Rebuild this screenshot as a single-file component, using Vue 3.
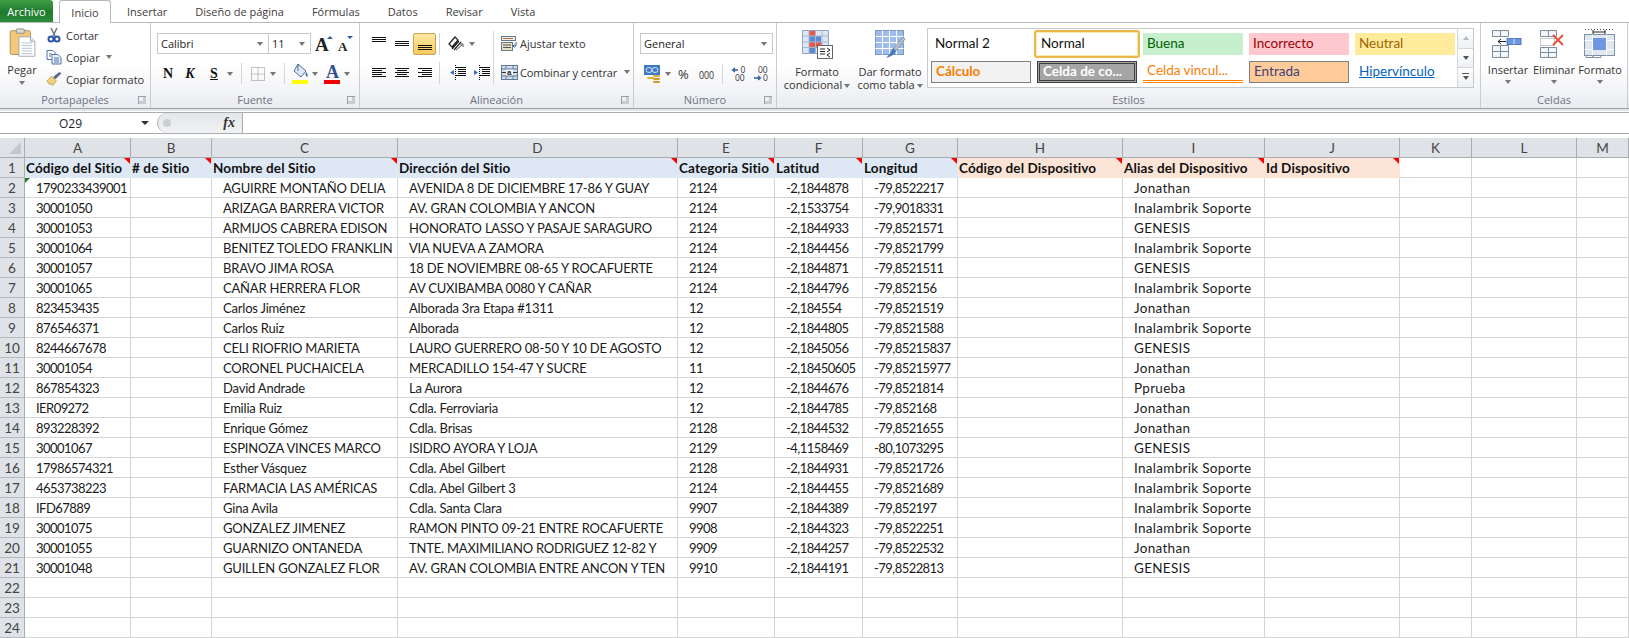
<script setup>
const columns = ['A','B','C','D','E','F','G','H','I','J','K','L','M']
const head = ['Código del Sitio','# de Sitio','Nombre del Sitio','Dirección del Sitio','Categoria Sitio','Latitud','Longitud','Código del Dispositivo','Alias del Dispositivo','Id Dispositivo']
const rows = [
['1790233439001','AGUIRRE MONTAÑO DELIA','AVENIDA 8 DE DICIEMBRE 17-86 Y GUAY','2124','-2,1844878','-79,8522217','Jonathan'],
['30001050','ARIZAGA BARRERA VICTOR','AV. GRAN COLOMBIA Y ANCON','2124','-2,1533754','-79,9018331','Inalambrik Soporte'],
['30001053','ARMIJOS CABRERA EDISON','HONORATO LASSO Y PASAJE SARAGURO','2124','-2,1844933','-79,8521571','GENESIS'],
['30001064','BENITEZ TOLEDO FRANKLIN','VIA NUEVA A ZAMORA','2124','-2,1844456','-79,8521799','Inalambrik Soporte'],
['30001057','BRAVO JIMA ROSA','18 DE NOVIEMBRE 08-65 Y ROCAFUERTE','2124','-2,1844871','-79,8521511','GENESIS'],
['30001065','CAÑAR HERRERA FLOR','AV CUXIBAMBA 0080 Y CAÑAR','2124','-2,1844796','-79,852156','Inalambrik Soporte'],
['823453435','Carlos Jiménez','Alborada 3ra Etapa #1311','12','-2,184554','-79,8521519','Jonathan'],
['876546371','Carlos Ruiz','Alborada','12','-2,1844805','-79,8521588','Inalambrik Soporte'],
['8244667678','CELI RIOFRIO MARIETA','LAURO GUERRERO 08-50 Y 10 DE AGOSTO','12','-2,1845056','-79,85215837','GENESIS'],
['30001054','CORONEL PUCHAICELA','MERCADILLO 154-47 Y SUCRE','11','-2,18450605','-79,85215977','Jonathan'],
['867854323','David Andrade','La Aurora','12','-2,1844676','-79,8521814','Pprueba'],
['IER09272','Emilia Ruiz','Cdla. Ferroviaria','12','-2,1844785','-79,852168','Jonathan'],
['893228392','Enrique Gómez','Cdla. Brisas','2128','-2,1844532','-79,8521655','Jonathan'],
['30001067','ESPINOZA VINCES MARCO','ISIDRO AYORA Y LOJA','2129','-4,1158469','-80,1073295','GENESIS'],
['17986574321','Esther Vásquez','Cdla. Abel Gilbert','2128','-2,1844931','-79,8521726','Inalambrik Soporte'],
['4653738223','FARMACIA LAS AMÉRICAS','Cdla. Abel Gilbert 3','2124','-2,1844455','-79,8521689','Inalambrik Soporte'],
['IFD67889','Gina Avila','Cdla. Santa Clara','9907','-2,1844389','-79,852197','Inalambrik Soporte'],
['30001075','GONZALEZ JIMENEZ','RAMON PINTO 09-21 ENTRE ROCAFUERTE','9908','-2,1844323','-79,8522251','Inalambrik Soporte'],
['30001055','GUARNIZO ONTANEDA','TNTE. MAXIMILIANO RODRIGUEZ 12-82 Y','9909','-2,1844257','-79,8522532','Jonathan'],
['30001048','GUILLEN GONZALEZ FLOR','AV. GRAN COLOMBIA ENTRE ANCON Y TEN','9910','-2,1844191','-79,8522813','GENESIS'],
]
// map a data row onto the 13 visible columns (A..M)
const cellsFor = r => [r[0],'',r[1],r[2],r[3],r[4],r[5],'',r[6],'','','','']
const kind = ['num','','txt','txt','num','num','num','','ali','','','','']
const blanks = [22,23,24]
const alignTop = [1,3,5]
const alignMid = [5,7,9]
const alignBot = [9,11,13]
</script>

<template>
  <div class="app">
    <nav class="tabs">
      <span class="tab-file">Archivo</span>
      <span class="tab-on">Inicio</span>
      <span class="tab first">Insertar</span>
      <span class="tab">Diseño de página</span>
      <span class="tab">Fórmulas</span>
      <span class="tab">Datos</span>
      <span class="tab">Revisar</span>
      <span class="tab">Vista</span>
    </nav>

    <section class="ribbon">
      <!-- Portapapeles -->
      <div class="group g-clip">
        <div class="gbody clip-body">
          <div class="big pegar">
            <svg width="27" height="30" viewBox="0 0 30 34">
              <rect x="1" y="3" width="23" height="27" rx="2" fill="#f4c878" stroke="#b0894f"/>
              <rect x="8" y="1" width="9" height="5" rx="1" fill="#d9d9d9" stroke="#8a8a8a"/>
              <path d="M11 10h13l5 5v17H11z" fill="#fff" stroke="#9aa3ad"/>
              <path d="M24 10v5h5" fill="#e6e9ec" stroke="#9aa3ad"/>
              <path d="M14 17h12M14 20h12M14 23h12M14 26h12M14 29h12" stroke="#a9b9cc"/>
            </svg>
            <span class="lbl">Pegar</span>
            <i class="car"></i>
          </div>
          <div class="clip-list">
            <div class="clip-item">
              <svg width="16" height="16" viewBox="0 0 16 16">
                <path d="M5 1l4 8M11 1L7 9" stroke="#6c7480" stroke-width="1.5" fill="none"/>
                <circle cx="5" cy="12" r="2.5" fill="none" stroke="#2b55a8" stroke-width="2"/>
                <circle cx="11" cy="12" r="2.5" fill="none" stroke="#2b55a8" stroke-width="2"/>
              </svg>
              <span>Cortar</span>
            </div>
            <div class="clip-item">
              <svg width="16" height="16" viewBox="0 0 16 16">
                <path d="M1 1.500h6l2 2v7H1z" fill="#fff" stroke="#4d74ad"/>
                <path d="M6 5.500h6l3 3v6.500H6z" fill="#eaf1fa" stroke="#4d74ad"/>
                <path d="M3 5h3M3 7h2M8 9h5M8 11h5M8 13h5" stroke="#4d74ad"/>
              </svg>
              <span>Copiar</span><i class="car sp"></i>
            </div>
            <div class="clip-item">
              <svg width="16" height="16" viewBox="0 0 17 16">
                <path d="M1 10l5-5 5 5-4 5-2-2-1 1z" fill="#efd27c" stroke="#a98b3a" stroke-width=".7"/>
                <path d="M8 6l2 2 6-6-2-1z" fill="#5b6b8d" stroke="#3e4b68" stroke-width=".6"/>
              </svg>
              <span>Copiar formato</span>
            </div>
          </div>
        </div>
        <div class="glabel"><span></span><span>Portapapeles</span><i class="launch"></i></div>
      </div>

      <!-- Fuente -->
      <div class="group g-font">
        <div class="gbody stack font-body">
          <div class="row r1">
            <div class="combo c-name"><span>Calibri</span><i class="car"></i></div>
            <div class="combo c-size"><span>11</span><i class="car"></i></div>
            <svg class="grow" width="20" height="20" viewBox="0 0 20 20">
              <text x="0" y="17" class="ga big-a">A</text>
              <path d="M12 5l3-3 3 3z" fill="#2f5f9f"/>
            </svg>
            <svg class="shrink" width="18" height="20" viewBox="0 0 18 20">
              <text x="1" y="17" class="ga small-a">A</text>
              <path d="M10 2h6l-3 3z" fill="#2f5f9f"/>
            </svg>
          </div>
          <div class="row r2">
            <span class="fmt b">N</span>
            <span class="fmt i">K</span>
            <span class="fmt u">S</span>
            <i class="car ml2"></i>
            <i class="vsep fs1"></i>
            <svg width="14" height="14" viewBox="0 0 14 14">
              <path d="M.5.5h13v13H.5zM7 .5v13M.5 7h13" fill="none" stroke="#8c8c8c" stroke-dasharray="1 1"/>
            </svg>
            <i class="car ml5"></i>
            <i class="vsep fs2"></i>
            <svg width="17" height="22" viewBox="0 0 17 22">
              <path d="M6 1l8 7-5 6-7-6z" fill="#dfe9f5" stroke="#4a6a94"/>
              <path d="M6 1v7" stroke="#4a6a94"/>
              <path d="M14 9c2 2 2 4 1 5-1-1-2-3-1-5z" fill="#2f5f9f"/>
              <rect x="0" y="17" width="16" height="4" fill="#ffff00"/>
            </svg>
            <i class="car ml3"></i>
            <svg class="col-a" width="17" height="22" viewBox="0 0 17 22">
              <text x="2" y="15" class="ga col-t">A</text>
              <rect x="0" y="17" width="16" height="4" fill="#f00000"/>
            </svg>
            <i class="car ml3"></i>
          </div>
        </div>
        <div class="glabel"><span></span><span>Fuente</span><i class="launch"></i></div>
      </div>

      <!-- Alineación -->
      <div class="group g-align">
        <div class="gbody align-body">
          <div class="stack left-block">
            <div class="row ar1">
              <span class="ab"><svg width="16" height="16" viewBox="0 0 16 16"><path v-for="l in alignTop" :key="l" :d="`M1 ${l+.5}h14`" stroke="#111"/></svg></span>
              <span class="ab"><svg width="16" height="16" viewBox="0 0 16 16"><path v-for="l in alignMid" :key="l" :d="`M1 ${l+.5}h14`" stroke="#111"/></svg></span>
              <span class="ab on"><svg width="16" height="16" viewBox="0 0 16 16"><path v-for="l in alignBot" :key="l" :d="`M1 ${l+.5}h14`" stroke="#111"/></svg></span>
              <i class="vsep s2"></i>
              <svg class="orient" width="18" height="16" viewBox="0 0 18 16">
                <path d="M1 8l6-7 3 3-6 7zM4 13l7-8M6 14l7-8" fill="#fff" stroke="#222" stroke-width="1.2"/>
                <path d="M8 14l6-5M12 8h3v3" stroke="#555" fill="none"/>
              </svg>
              <i class="car"></i>
            </div>
            <div class="row ar2">
              <span class="ab"><svg width="16" height="16" viewBox="0 0 16 16"><path d="M1 3.500h14M1 5.500h10M1 7.500h14M1 9.500h10M1 11.500h14" stroke="#111"/></svg></span>
              <span class="ab"><svg width="16" height="16" viewBox="0 0 16 16"><path d="M1 3.500h14M3 5.500h10M1 7.500h14M3 9.500h10M1 11.500h14" stroke="#111"/></svg></span>
              <span class="ab"><svg width="16" height="16" viewBox="0 0 16 16"><path d="M1 3.500h14M5 5.500h10M1 7.500h14M5 9.500h10M1 11.500h14" stroke="#111"/></svg></span>
              <i class="vsep s2"></i>
              <span class="ab wide"><svg width="17" height="16" viewBox="0 0 17 16"><path d="M7 2.500h10M9 4.500h8M9 6.500h8M9 8.500h8M7 10.500h10" stroke="#111"/><path d="M6.500 0v15" stroke="#111" stroke-dasharray="1 1"/><path d="M5 5v5L1 7.500z" fill="#2f6fc4"/></svg></span>
              <span class="ab wide"><svg width="17" height="16" viewBox="0 0 17 16"><path d="M7 2.500h10M9 4.500h8M9 6.500h8M9 8.500h8M7 10.500h10" stroke="#111"/><path d="M6.500 0v15" stroke="#111" stroke-dasharray="1 1"/><path d="M1 5v5l4-2.500z" fill="#2f6fc4"/></svg></span>
            </div>
          </div>
          <i class="vsep tall"></i>
          <div class="stack right-block">
            <div class="act">
              <svg width="17" height="17" viewBox="0 0 17 17">
                <rect x=".5" y="1.500" width="14" height="4" fill="#eef2f7" stroke="#6b7885"/>
                <path d="M2 3.500h10" stroke="#c46a1e"/>
                <rect x=".5" y="7.500" width="11" height="8" fill="#e9dfc9" stroke="#6b7885"/>
                <path d="M2 10h8M2 12.500h8" stroke="#555"/>
                <path d="M15 7v4h-3M13.500 9.500L12 11l1.500 1.500" fill="none" stroke="#2f5f9f"/>
              </svg>
              <span>Ajustar texto</span>
            </div>
            <div class="act">
              <svg width="17" height="15" viewBox="0 0 17 15">
                <rect x=".5" y=".5" width="16" height="14" fill="#cfdcec" stroke="#5f7a9b"/>
                <rect x="5" y="4" width="7" height="7" fill="#fff"/>
                <path d="M.5 4h16M.5 11h16M5 .5v3M12 .5v3M5 11v3.500M12 11v3.500" stroke="#5f7a9b"/>
                <path d="M1 7.500h4M12 7.500h4" stroke="#333"/>
                <text x="6" y="10" class="merge-a">a</text>
              </svg>
              <span class="tight">Combinar y centrar</span><i class="car sp"></i>
            </div>
          </div>
        </div>
        <div class="glabel"><span></span><span>Alineación</span><i class="launch"></i></div>
      </div>

      <!-- Número -->
      <div class="group g-num">
        <div class="gbody stack num-body">
          <div class="combo c-gen"><span>General</span><i class="car"></i></div>
          <div class="row nr2">
            <svg width="17" height="18" viewBox="0 0 17 18">
              <rect x="0" y="0" width="16" height="10" fill="#3f78c4"/>
              <ellipse cx="5" cy="5" rx="3" ry="2.500" fill="none" stroke="#cfe0f5"/>
              <ellipse cx="11" cy="5" rx="3" ry="2.500" fill="none" stroke="#cfe0f5"/>
              <rect x="3" y="12" width="7" height="2" rx="1" fill="#e2b13c"/>
              <rect x="9" y="10" width="7" height="2" rx="1" fill="#e2b13c"/>
              <rect x="9" y="13" width="7" height="2" rx="1" fill="#d39b25"/>
              <rect x="9" y="16" width="7" height="2" rx="1" fill="#d39b25"/>
            </svg>
            <i class="car m4"></i>
            <span class="numsym pct">%</span>
            <span class="numsym mil">000</span>
            <i class="vsep s3"></i>
            <svg class="dec1" width="16" height="18" viewBox="0 0 16 18">
              <path d="M7 5H2M4 3L1.500 5 4 7" fill="none" stroke="#2f5f9f" stroke-width="1.300"/>
              <text x="9.500" y="8" class="dz">0</text>
              <text x="4" y="16" class="dz">00</text>
            </svg>
            <svg class="dec2" width="16" height="18" viewBox="0 0 16 18">
              <text x="5" y="8" class="dz">00</text>
              <path d="M1 13h6M5 11l2.500 2L5 15" fill="none" stroke="#2f5f9f" stroke-width="1.300"/>
              <text x="10" y="16" class="dz">0</text>
            </svg>
          </div>
        </div>
        <div class="glabel"><span></span><span>Número</span><i class="launch"></i></div>
      </div>

      <!-- Estilos -->
      <div class="group g-style">
        <div class="gbody style-body">
          <div class="bigbtn b-cond">
            <svg width="31" height="29" viewBox="0 0 31 29">
              <path d="M.5.5h26v23H.5z" fill="#dbe7f6" stroke="#8ea4c0"/>
              <rect x="7" y="1" width="6" height="5" fill="#e9584a"/>
              <rect x="7" y="6" width="12" height="6" fill="#5a8ad8"/>
              <rect x="7" y="12" width="13" height="5" fill="#e9584a"/>
              <rect x="7" y="17" width="6" height="6" fill="#5a8ad8"/>
              <path d="M7 .5v23M13.500 .5v23M20 .5v23M.5 6h26M.5 12h26M.5 17.500h26" stroke="#a9b9cc" fill="none"/>
              <rect x="15.500" y="15.500" width="15" height="13" fill="#fff" stroke="#666"/>
              <path d="M18 19h5M18 21.500h5M18 24h5M25 18l3 2-3 2M28 23l-3 2 3 2" stroke="#222" fill="none"/>
            </svg>
            <span class="lbl2">Formato<br>condicional<i class="car in"></i></span>
          </div>
          <div class="bigbtn b-table">
            <svg width="31" height="29" viewBox="0 0 31 29">
              <rect x=".5" y=".5" width="28" height="24" fill="#9dbcec" stroke="#7f97b8"/>
              <path d="M.5 6.500h28M.5 12.500h28M.5 18.500h28M7.500 .5v24M14.500 .5v24M21.500 .5v24" stroke="#fff"/>
              <path d="M30 9l-9 12-3-2 10-12z" fill="#b8bfc9" stroke="#73808f" stroke-width=".7"/>
              <path d="M18 18l3 3c-2 4-6 6-10 7 3-3 5-6 7-10z" fill="#4a78b8"/>
            </svg>
            <span class="lbl2">Dar formato<br>como tabla<i class="car in"></i></span>
          </div>
          <div class="gallery">
            <div class="sgrid">
              <span class="st s-n2">Normal 2</span>
              <span class="st s-norm">Normal</span>
              <span class="st s-good">Buena</span>
              <span class="st s-bad">Incorrecto</span>
              <span class="st s-neu">Neutral</span>
              <span class="st s-calc">Cálculo</span>
              <span class="st s-chk">Celda de co...</span>
              <span class="st s-link">Celda vincul...</span>
              <span class="st s-in">Entrada</span>
              <span class="st s-hy"><u>Hipervínculo</u></span>
            </div>
            <div class="gscroll">
              <span><i class="car up"></i></span>
              <span><i class="car dark"></i></span>
              <span><i class="car dark bar"></i></span>
            </div>
          </div>
        </div>
        <div class="glabel single"><span>Estilos</span></div>
      </div>

      <!-- Celdas -->
      <div class="group g-cell">
        <div class="gbody cell-body">
          <div class="cellbtn">
            <svg width="32" height="30" viewBox="0 0 32 30">
              <path d="M.5 1.500h16v6H.5zM8.500 1.500v6M.5 16.500h16v12H.5zM8.500 16.500v12M.5 22.500h16" fill="#f3f6fa" stroke="#7f8c9b"/>
              <rect x="15" y="9.500" width="14" height="6" fill="#6d97e0" stroke="#4f78bf"/>
              <path d="M22 9.500v6" stroke="#cfe0f5"/>
              <path d="M6 12.500h8M9 10l-3 2.500L9 15" stroke="#222" fill="none"/>
            </svg>
            <span>Insertar</span><i class="car"></i>
          </div>
          <div class="cellbtn">
            <svg width="32" height="30" viewBox="0 0 32 30">
              <path d="M2.500 1.500h16v6h-16zM10.500 1.500v6M2.500 18.500h16v10h-16zM10.500 18.500v10M2.500 23.500h16" fill="#f3f6fa" stroke="#7f8c9b"/>
              <rect x="2.500" y="9.500" width="14" height="7" fill="#fff" stroke="#888" stroke-dasharray="1 1"/>
              <path d="M15 6l10 10M25 6L15 16" stroke="#e8503c" stroke-width="2"/>
            </svg>
            <span>Eliminar</span><i class="car"></i>
          </div>
          <div class="cellbtn">
            <svg width="32" height="30" viewBox="0 0 32 30">
              <path d="M1 .5h29" stroke="#444" stroke-dasharray="1 2"/>
              <path d="M9 3h12M9 1v4M21 1v4" stroke="#222"/>
              <rect x=".5" y="5.500" width="30" height="21" fill="#dfe7f1" stroke="#8090a3"/>
              <path d="M8.500 5.500v21M22.500 5.500v21M.5 11.500h30M.5 20.500h30" stroke="#fff"/>
              <rect x="9" y="9" width="13" height="12" fill="#6d97e0"/>
              <path d="M2 26.500v2h7v-2M9 26.500v2h8v-2" fill="none" stroke="#8090a3"/>
            </svg>
            <span>Formato</span><i class="car"></i>
          </div>
        </div>
        <div class="glabel single"><span>Celdas</span></div>
      </div>
    </section>

    <section class="formula">
      <div class="namebox"><span>O29</span><i class="car darkbig"></i></div>
      <div class="fxpill"><span class="dot"></span><span class="fx">fx</span></div>
      <div class="fxinput"></div>
    </section>

    <section class="sheet">
      <div class="corner"><i></i></div>
      <div v-for="c in columns" :key="c" class="colh">{{ c }}</div>

      <div class="rowh">1</div>
      <div v-for="(h, i) in head" :key="h" class="cell hd" :class="i > 6 ? 'peach' : 'blue'">{{ h }}</div>
      <div class="cell"></div><div class="cell"></div><div class="cell"></div>

      <template v-for="(r, ri) in rows" :key="ri">
        <div class="rowh">{{ ri + 2 }}</div>
        <div v-for="(v, ci) in cellsFor(r)" :key="ci" class="cell data" :class="[kind[ci], { flag: ri === 0 && ci === 0 }]">{{ v }}</div>
      </template>

      <template v-for="b in blanks" :key="b">
        <div class="rowh">{{ b }}</div>
        <div v-for="c in columns" :key="c" class="cell"></div>
      </template>
    </section>
  </div>
</template>

<style>
html, body { margin: 0; background: #fff; overflow: hidden; }
</style>

<style scoped>
.app { width: 1629px; height: 638px; overflow: hidden; display: flex; flex-direction: column; background: #fff; font-family: "Open Sans", "Liberation Sans", sans-serif; font-size: 11px; color: #333; }
i { display: block; font-style: normal; }

/* tabs */
.tabs { height: 23px; flex: none; display: flex; align-items: stretch; box-sizing: border-box; border-bottom: 1px solid #b6babf; color: #3c3c3c; }
.tabs > span { display: flex; align-items: center; }
.tab-file { width: 53px; justify-content: center; color: #fff; background: linear-gradient(#3f9c46, #1f7a2e 55%, #2b8c38); border-radius: 0 3px 0 0; }
.tab-on { margin-left: 6px; width: 52px; box-sizing: border-box; height: 23px; justify-content: center; background: #fff; border: 1px solid #b6babf; border-bottom: 0; border-radius: 3px 3px 0 0; }
.tab { padding: 0 14px; }
.tab.first { margin-left: 2px; }

/* ribbon */
.ribbon { height: 85px; flex: none; display: flex; box-sizing: content-box; background: linear-gradient(#fff 0, #fff 50%, #e9ebef 100%); border-bottom: 1px solid #9da0a5; box-shadow: 0 2px 0 #e2e4e7; }
.group { display: flex; flex-direction: column; box-sizing: border-box; border-right: 1px solid #c9cdd2; height: 85px; }
.g-clip { width: 151px; }
.g-font { width: 209px; }
.g-align { width: 274px; }
.g-num { width: 143px; }
.g-style { width: 704px; }
.g-cell { width: 147px; }
.gbody { flex: 1; min-height: 0; }
.glabel { height: 16px; flex: none; display: grid; grid-template-columns: 1fr auto 1fr; align-items: center; color: #6d7480; padding-bottom: 1px; box-sizing: border-box; }
.glabel.single { grid-template-columns: 1fr; text-align: center; }
.launch { justify-self: end; width: 7px; height: 7px; margin-right: 4px; border-left: 1px solid #9aa0a8; border-top: 1px solid #9aa0a8; box-shadow: inset -3px -3px 0 #c8ccd2; }
.car { width: 0; height: 0; border-left: 3.5px solid transparent; border-right: 3.5px solid transparent; border-top: 4px solid #777; flex: none; }
.car.sp { margin-left: 2px; }
.car.m4 { margin-left: 4px; }
.car.ml2 { margin-left: 2px; }
.car.ml3 { margin-left: 3px; }
.car.ml5 { margin-left: 5px; }
.car.in { display: inline-block; margin-left: 2px; vertical-align: middle; }
.car.up { border-top: 0; border-bottom: 4px solid #b5bac0; }
.car.dark { border-top-color: #555; }
.car.bar { position: relative; }
.car.bar::before { content: ""; position: absolute; top: -7px; left: -3.5px; width: 7px; height: 1px; background: #555; }
.car.darkbig { border-top-color: #333; border-left-width: 4px; border-right-width: 4px; }
.stack { display: flex; flex-direction: column; }
.row { display: flex; align-items: center; }
.vsep { width: 1px; background: #d3d6da; flex: none; }

/* clipboard */
.clip-body { display: flex; padding-top: 4px; }
.big { display: flex; flex-direction: column; align-items: center; }
.pegar { width: 44px; flex: none; padding-top: 1px; }
.pegar .lbl { margin-top: 5px; line-height: 14px; }
.pegar .car { margin-top: 4px; }
.clip-list { display: flex; flex-direction: column; padding-left: 2px; gap: 6px; }
.clip-item { display: flex; align-items: center; gap: 4px; height: 16px; white-space: nowrap; }

/* font */
.font-body { padding: 10px 0 0 6px; }
.r1 { height: 21px; }
.combo { display: flex; align-items: center; justify-content: space-between; box-sizing: border-box; height: 21px; border: 1px solid #c6cacf; background: #fff; padding: 0 5px 0 3px; color: #222; }
.c-name { width: 112px; }
.c-size { width: 43px; margin-left: -1px; }
.grow { margin-left: 4px; }
.shrink { margin-left: 2px; }
.ga { font-family: "Liberation Serif", serif; font-weight: 700; fill: #222; }
.big-a { font-size: 19px; }
.small-a { font-size: 13px; }
.col-t { font-size: 18px; fill: #2f4f8f; }
.r2 { margin-top: 8px; height: 23px; }
.fmt { width: 22px; text-align: center; font-family: "Liberation Serif", serif; font-weight: 700; font-size: 14px; color: #111; flex: none; }
.fmt.i { font-style: italic; }
.fmt.u { text-decoration: underline; margin-left: 2px; }
.r2 .vsep { height: 21px; }
.vsep.fs1 { margin: 0 9px 0 8px; }
.vsep.fs2 { margin: 0 7px 0 8px; }
.col-a { margin-left: 6px; }

/* alignment */
.align-body { display: flex; padding-top: 10px; }
.left-block { padding-left: 7px; width: 133px; box-sizing: border-box; flex: none; }
.ar1 { height: 22px; }
.ar2 { height: 22px; margin-top: 7px; }
.ab { width: 23px; height: 22px; display: flex; align-items: center; justify-content: center; flex: none; box-sizing: border-box; }
.ab.on { background: linear-gradient(#fde9a6, #fbc95a); border: 1px solid #c8a35a; border-radius: 2px; }
.ab.wide { width: 24px; }
.vsep.s2 { height: 22px; margin: 0 5px 0 3px; }
.orient { margin-left: 3px; margin-right: 3px; }
.vsep.tall { height: 54px; margin: -2px 7px 0 0; }
.right-block { gap: 9px; }
.act { display: flex; align-items: center; gap: 2px; height: 20px; white-space: nowrap; }
.tight { letter-spacing: -.1px; margin-right: 3px; }

/* number */
.num-body { padding: 10px 0 0 6px; }
.c-gen { width: 133px; }
.nr2 { margin-top: 10px; height: 20px; padding-left: 4px; }
.numsym { color: #333; flex: none; }
.pct { font-size: 13px; margin-left: 7px; }
.mil { margin-left: 8px; font-size: 11px; transform: scaleX(.8); }
.vsep.s3 { height: 20px; margin: 0 8px 0 6px; }
.dec2 { margin-left: 6px; }
.dz { font-family: "Open Sans", sans-serif; font-size: 8.5px; fill: #333; }

/* styles */
.style-body { display: flex; padding-top: 5px; }
.bigbtn { display: flex; flex-direction: column; align-items: center; text-align: center; flex: none; line-height: 13px; padding-top: 2px; }
.b-cond { width: 74px; margin-left: 3px; }
.b-table { width: 70px; margin-left: 1px; }
.lbl2 { margin-top: 6px; white-space: nowrap; }
.gallery { margin-left: 2px; width: 547px; height: 60px; box-sizing: border-box; display: flex; border: 1px solid #c6cacf; background: #fff; }
.sgrid { flex: 1; display: grid; grid-template-columns: repeat(5, 100px); grid-auto-rows: 22px; gap: 6px; padding: 4px 0 0 3px; font-family: Lato, "Liberation Sans", sans-serif; font-size: 13.5px; }
.st { display: flex; align-items: center; box-sizing: border-box; padding: 0 0 2px 4px; white-space: nowrap; color: #111; }
.s-norm { margin: -3px -3px; padding-left: 5px; width: 106px; height: 28px; background: #fff; border: 2px solid #e8b94a; border-radius: 3px; box-shadow: inset 0 0 0 1px #fdeaa8; }
.s-good { background: #c6efce; color: #006100; }
.s-bad { background: #ffc7ce; color: #9c0006; }
.s-neu { background: #ffeb9c; color: #9c6500; }
.s-calc { background: #f2f2f2; color: #fa7d00; font-weight: 700; border: 1px solid #7f7f7f; }
.s-chk { background: #a5a5a5; color: #fff; font-weight: 700; border: 3px double #3f3f3f; padding-left: 3px; }
.s-link { color: #fa7d00; border-bottom: 3px double #ff8001; }
.s-in { background: #ffcc99; color: #3f3f76; border: 1px solid #7f7f7f; }
.s-hy { color: #0563c1; }
.gscroll { width: 15px; flex: none; display: flex; flex-direction: column; border-left: 1px solid #d4d7db; }
.gscroll span { flex: 1; display: flex; align-items: center; justify-content: center; border-bottom: 1px solid #d4d7db; background: linear-gradient(#fff, #eef0f3); }
.gscroll span:last-child { border-bottom: 0; }

/* cells */
.cell-body { display: flex; padding: 6px 0 0 4px; }
.cellbtn { display: flex; flex-direction: column; align-items: center; width: 46px; flex: none; line-height: 14px; }
.cellbtn span { margin-top: 4px; }
.cellbtn .car { margin-top: 3px; }

/* formula bar */
.formula { margin-top: 3px; height: 22px; flex: none; box-sizing: border-box; display: flex; align-items: stretch; border-top: 1px solid #a9adb2; border-bottom: 1px solid #a9adb2; background: #fff; position: relative; }
.namebox { width: 157px; flex: none; display: grid; grid-template-columns: 1fr 16px; align-items: center; font-size: 12px; color: #222; text-align: center; box-sizing: border-box; }
.fxpill { width: 85px; flex: none; display: flex; align-items: center; justify-content: space-between; background: linear-gradient(#e4e6ea, #f1f2f4); border-radius: 10px 0 0 10px; border-left: 1px solid #a9adb2; padding: 0 7px 0 5px; box-sizing: border-box; }
.dot { width: 8px; height: 8px; border-radius: 50%; background: #ccd0d5; }
.fx { font-family: "Liberation Serif", serif; font-style: italic; font-weight: 700; font-size: 14px; color: #333; }
.fxinput { flex: 1; border-left: 1px solid #a9adb2; }

/* sheet */
.sheet { margin-top: 4px; display: grid; grid-template-columns: 25px 106px 81px 186px 280px 97px 88px 95px 165px 142px 135px 72px 105px 52px; grid-auto-rows: 20px; font-family: Lato, "Liberation Sans", sans-serif; font-size: 13.5px; color: #1a1a1a; }
.corner { background: #dfe3e8; border-right: 1px solid #a9adb2; border-bottom: 1px solid #a9adb2; box-sizing: border-box; display: flex; align-items: flex-end; justify-content: flex-end; padding: 0 3px 3px 0; }
.corner i { width: 0; height: 0; border-left: 12px solid transparent; border-bottom: 12px solid #c3c7cd; }
.colh { background: #dfe3e8; box-sizing: border-box; border-right: 1px solid #a9adb2; border-bottom: 1px solid #a9adb2; display: flex; align-items: center; justify-content: center; color: #444; }
.rowh { background: #dfe3e8; box-sizing: border-box; border-right: 1px solid #a9adb2; border-bottom: 1px solid #b5b9be; display: flex; align-items: center; justify-content: center; color: #444; padding-top: 1px; }
.cell { box-sizing: border-box; border-right: 1px solid #d4d4d4; border-bottom: 1px solid #d4d4d4; white-space: nowrap; overflow: hidden; line-height: 21px; position: relative; }
.data { padding-left: 11px; }
.num { font-size: 13px; letter-spacing: -.55px; }
.txt { font-size: 13px; letter-spacing: -.2px; }
.ali { letter-spacing: .3px; }
.hd { font-weight: 700; padding-left: 1px; color: #111; letter-spacing: .12px; }
.blue { background: #dde8f4; }
.peach { background: #fbe3d5; }
.hd.blue, .hd.peach { border-right-color: transparent; border-bottom-color: transparent; }
.hd::after { content: ""; position: absolute; top: 0; right: 0; width: 0; height: 0; border-top: 6px solid #ff0000; border-left: 6px solid transparent; }
.flag::before { content: ""; position: absolute; top: 0; left: 0; width: 0; height: 0; border-top: 5px solid #1e7b1e; border-right: 5px solid transparent; }
.merge-a { font-family: "Liberation Sans", sans-serif; font-size: 8px; font-weight: 700; fill: #222; }
</style>
